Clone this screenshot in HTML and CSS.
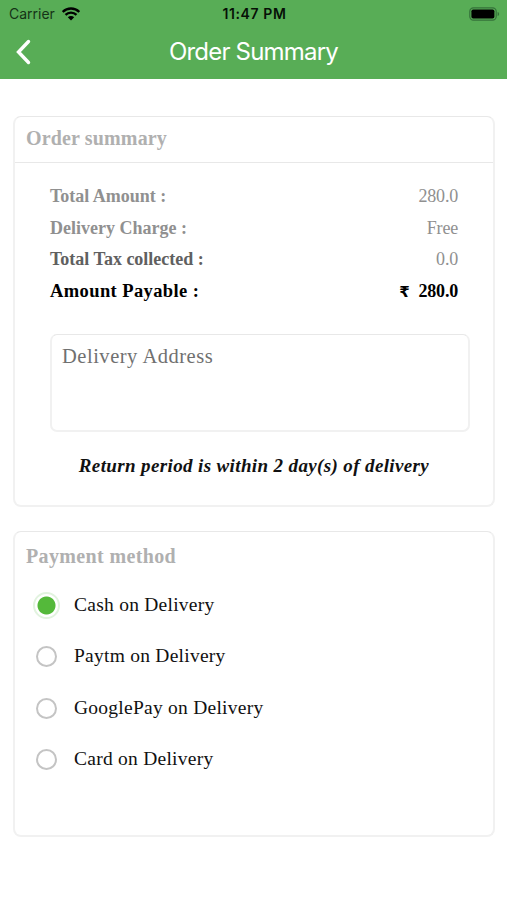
FILE: index.html
```html
<!DOCTYPE html>
<html lang="en">
<head>
<meta charset="utf-8">
<title>Order Summary</title>
<link rel="stylesheet" href="styles.css">
</head>
<body>
<header class="header">
  <div class="status">
    <div class="carrier">
      <span>Carrier</span>
      <svg class="wifi" viewBox="0 0 18 14"><path d="M.7 4.9a11.8 11.8 0 0 1 16.6 0M3.5 7.9a7.8 7.8 0 0 1 11 0" fill="none" stroke="#000" stroke-width="2.3"/><path d="M5.8 10.3a4.500 4.500 0 0 1 6.400 0L9 13.500z"/></svg>
    </div>
    <span class="time">11:47 PM</span>
    <svg class="battery" viewBox="0 0 31 14"><rect x=".8" y=".8" width="26.4" height="12.4" rx="3.6" fill="none" stroke="#35713a" stroke-width="1.2"/><rect x="2.4" y="2.4" width="23" height="9.2" rx="1.8"/><path d="M28.6 4.9c2 .7 2 3.500 0 4.200z" fill="#35713a"/></svg>
  </div>
  <div class="navbar">
    <svg class="back" viewBox="0 0 16 26"><path d="M13.500 2.500 3.500 13l10 10.500" fill="none" stroke="#fff" stroke-width="3.400" stroke-linecap="round" stroke-linejoin="miter"/></svg>
    <h1 class="title">Order Summary</h1>
  </div>
</header>
<main class="content">
  <section class="card summary">
    <h2 class="card-title ruled">Order summary</h2>
    <dl class="totals">
      <div class="row"><dt>Total Amount :</dt><dd>280.0</dd></div>
      <div class="row"><dt>Delivery Charge :</dt><dd>Free</dd></div>
      <div class="row tax"><dt>Total Tax collected :</dt><dd>0.0</dd></div>
      <div class="row payable"><dt>Amount Payable :</dt><dd><span class="rupee">₹</span>280.0</dd></div>
    </dl>
    <div class="address">Delivery Address</div>
    <p class="note">Return period is within 2 day(s) of delivery</p>
  </section>
  <section class="card payment">
    <h2 class="card-title method-title">Payment method</h2>
    <ul class="options">
      <li class="option"><i class="radio checked"></i><span>Cash on Delivery</span></li>
      <li class="option"><i class="radio"></i><span>Paytm on Delivery</span></li>
      <li class="option"><i class="radio"></i><span>GooglePay on Delivery</span></li>
      <li class="option"><i class="radio"></i><span>Card on Delivery</span></li>
    </ul>
  </section>
</main>
</body>
</html>
```
FILE: styles.css
```css
* { box-sizing: border-box; margin: 0; padding: 0; }
body { background: #fff; color: #111; font-family: "Palatino", "Liberation Serif", serif; white-space: nowrap; }
.header { height: 79px; background: #58ad56; font-family: Inter, "Liberation Sans", sans-serif; }
.status { height: 27px; display: grid; grid-template-columns: 1fr auto 1fr; align-items: center; padding: 0 7px 0 9px; color: #061006; font-size: 14px; }
.carrier { display: flex; align-items: center; gap: 7px; color: #153317; }
.wifi { width: 18px; height: 14px; }
.time { font-weight: 600; font-size: 14px; letter-spacing: .6px; }
.battery { width: 31px; height: 14px; justify-self: end; }
.navbar { height: 48px; display: grid; grid-template-columns: 1fr auto 1fr; align-items: center; padding: 0 15px; }
.back { width: 16px; height: 26px; margin-top: 2px; }
.title { color: #fff; font-size: 24px; font-weight: 400; letter-spacing: -.8px; }
.content { padding: 37px 12px 0 13px; display: flex; flex-direction: column; gap: 24px; }
.card { border: 2px solid #f1f1f1; border-top: 1px solid #e8e8e8; border-radius: 8px; padding-top: 1px; }
.summary { height: 391px; }
.payment { height: 306px; }
.card-title { height: 45px; padding: 0 11px; line-height: 41px; font-size: 20px; letter-spacing: .15px; color: #b0b0b0; }
.method-title { line-height: 46px; letter-spacing: .36px; }
.ruled { border-bottom: 1px solid #e8e8e8; }
.totals { padding: 18px 35px 0 35px; }
.row { height: 31.500px; display: flex; justify-content: space-between; line-height: 31px; font-size: 18px; color: #909090; }
dt { font-weight: 700; }
dd { letter-spacing: -.2px; }
.tax dt { color: #606060; }
.payable { color: #000; font-weight: 700; }
.payable dt { font-size: 18.500px; letter-spacing: .4px; }
.rupee { font-family: "DejaVu Sans", sans-serif; font-size: 15px; margin-right: 9px; }
.address { height: 98px; margin: 27px 23px 0 35px; border: 2px solid #f1f1f1; border-top: 1px solid #e8e8e8; border-radius: 7px; padding: 1px 10px; line-height: 40px; font-size: 20.500px; letter-spacing: .52px; color: #707070; }
.note { margin-top: 22px; text-align: center; line-height: 24px; font-size: 19px; letter-spacing: .37px; font-style: italic; font-weight: 700; }
.options { list-style: none; padding: 2px 18px; }
.option { height: 51.300px; display: flex; align-items: center; gap: 14px; font-size: 19.500px; letter-spacing: .25px; }
.option span { margin-top: -1px; }
.radio { width: 21px; height: 21px; margin: 0 3px; border: 2px solid #c4c4c4; border-radius: 50%; }
.checked { width: 27px; height: 27px; margin: 0; border: 2px solid #e2f3df; background: radial-gradient(circle, #54b93a 0 8.500px, #fff 9.500px); }
```
